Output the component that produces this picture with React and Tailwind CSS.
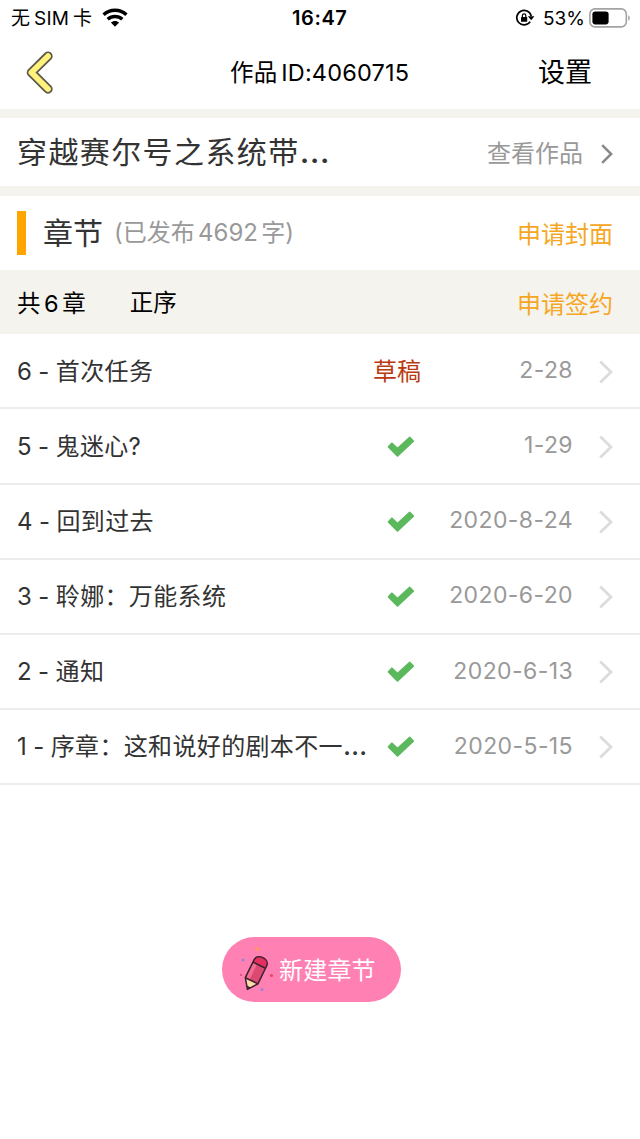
import React from "react";
import clsx from "clsx";

const chapters = [
  { no: 6, title: "首次任务", date: "2-28", draft: true },
  { no: 5, title: "鬼迷心?", date: "1-29" },
  { no: 4, title: "回到过去", date: "2020-8-24" },
  { no: 3, title: "聆娜：万能系统", date: "2020-6-20" },
  { no: 2, title: "通知", date: "2020-6-13" },
  { no: 1, title: "序章：这和说好的剧本不一", more: true, date: "2020-5-15" },
];

const Wifi = () => (
  <svg width="26" height="20" viewBox="0 0 26 20" fill="none" stroke="#000" strokeWidth="3.5">
    <path d="M1.6 6.8C8 0.8 18 0.8 24.4 6.8" />
    <path d="M5.7 11.3C10 7.5 16 7.5 20.3 11.3" />
    <path d="M8.9 14.6C11.3 12.4 14.7 12.4 17.1 14.6L13 18.8Z" fill="#000" stroke="none" />
  </svg>
);

const RotationLock = () => (
  <svg width="20" height="18" viewBox="0 0 20 18" fill="none">
    <path d="M15.2 12.6A7.3 7.3 0 1 1 16.2 7" stroke="#000" strokeWidth="1.7" />
    <path d="M12.9 7.2H19.4L16.2 11.2Z" fill="#000" />
    <rect x="6" y="8" width="6.2" height="4.8" rx="0.6" fill="#000" />
    <path d="M7.4 8.4V6.6a1.7 1.7 0 0 1 3.4 0v1.8" stroke="#000" strokeWidth="1.2" />
  </svg>
);

const Battery = () => (
  <svg width="42" height="20" viewBox="0 0 42 20" fill="none">
    <rect x="0.9" y="0.9" width="36.4" height="18" rx="5" stroke="#a3a3a3" strokeWidth="1.6" />
    <rect x="3.4" y="3.4" width="16.2" height="13" rx="2.8" fill="#000" />
    <path d="M39.2 7.2c2.2 1 2.2 4.6 0 5.6z" fill="#a3a3a3" />
  </svg>
);

const BackIcon = () => (
  <svg width="28" height="44" viewBox="0 0 28 44" fill="none" strokeLinecap="round" strokeLinejoin="round">
    <path d="M22 5.2L5.4 21.5L22 38" stroke="#5a594b" strokeWidth="9.4" />
    <path d="M22 5.2L5.4 21.5L22 38" stroke="#fff17c" strokeWidth="5.8" />
  </svg>
);

const Check = () => (
  <svg width="28" height="22" viewBox="0 0 28 22" fill="#5cb85c" stroke="#5cb85c" strokeWidth="1.8" strokeLinejoin="round">
    <path d="M1.6 10.8L4.9 7.3L10.5 12.6L22.8 1.5L26.2 5.1L10.5 19.9Z" />
  </svg>
);

const Chevron = ({ className, width }) => (
  <svg className={className} width="14" height="24" viewBox="0 0 14 24" fill="none" stroke="currentColor" strokeWidth={width}>
    <path d="M1.2 1.4L12 12L1.2 22.6" />
  </svg>
);

const Pencil = () => (
  <svg width="36" height="48" viewBox="0 0 36 48" fill="none">
    <circle cx="17" cy="3" r="2.1" fill="#ff9868" />
    <circle cx="3" cy="14" r="1.5" fill="#9b7fe0" />
    <circle cx="1" cy="29" r="1" fill="#e8416d" />
    <circle cx="31.5" cy="29.5" r="1.6" fill="#ee4459" />
    <circle cx="22" cy="43.6" r="1.5" fill="#9b7fe0" />
    <g transform="translate(7.4 43.4) rotate(26)" strokeLinejoin="round">
      <path d="M0 0L-7 -9.6L7 -9.6Z" fill="#fbdcaa" />
      <path d="M0 0L-2.3 -3.2H2.3Z" fill="#3d2130" />
      <path d="M-7 -9.6H7V-27H-7Z" fill="#dc4a74" />
      <path d="M-7 -9.6H-2.4V-27H-7Z" fill="#f26d90" />
      <path d="M-7 -27H7V-29.5C7 -37.4 -7 -37.4 -7 -29.5Z" fill="#e5305f" />
      <path d="M0 0L-7 -9.6V-29.5C-7 -37.4 7 -37.4 7 -29.5V-9.6ZM-7 -9.6H7M-7 -27H7" stroke="#3d2130" strokeWidth="1.5" />
    </g>
  </svg>
);

const StatusBar = () => (
  <div className="flex h-9 items-center pl-[11px] pr-[9px] text-[19px] leading-none">
    <div className="flex w-[281px] items-center">
      <span className="w-[83px] whitespace-nowrap tracking-[0.3px] [word-spacing:-2px]">无 SIM 卡</span>
      <span className="ml-2">
        <Wifi />
      </span>
    </div>
    <span className="text-[20px] font-semibold tracking-[0.6px]">16:47</span>
    <div className="ml-auto flex items-center">
      <RotationLock />
      <span className="ml-2 mr-1">53%</span>
      <Battery />
    </div>
  </div>
);

const ChapterRow = ({ no, title, more, date, draft }) => (
  <li className="flex h-[75.1px] items-center border-b-2 border-[#ededed] pl-[17px] pr-[27px] pt-0.5">
    <span className="w-[356px] whitespace-nowrap text-[24px] text-[#333]">
      <span className="tracking-[-0.15px]">{no} - </span>
      <span className="tracking-[0.35px]">{title}</span>
      {more && <span className="text-[28px] leading-none tracking-[1px]">…</span>}
    </span>
    {draft ? (
      <span className="w-12 whitespace-nowrap text-[24px] text-[#b93a11]">草稿</span>
    ) : (
      <span className="ml-[14px]">
        <Check />
      </span>
    )}
    <span className="mb-[3px] ml-auto text-[23px] tracking-[0.4px] text-[#999]">{date}</span>
    <Chevron className="ml-[26px] text-[#dcdcdc]" width="2.8" />
  </li>
);

export default function App() {
  return (
    <div className={clsx("min-h-[1139px] w-[640px] overflow-hidden bg-white text-black", "font-['Inter','Noto_Sans_CJK_SC',sans-serif]")}>
      <header className="h-[109px]">
        <StatusBar />
        <div className="flex h-[73px] items-center pl-[26px] pr-[48px]">
          <BackIcon />
          <h1 className="ml-[176px] whitespace-nowrap text-[23.5px] tracking-[0.2px] [word-spacing:-3px]">作品 ID:4060715</h1>
          <span className="ml-auto pt-0.5 text-[27px]">设置</span>
        </div>
      </header>

      <section className="flex h-[87px] items-center justify-between border-b-[10px] border-t-[9px] border-[#f5f3ee] pl-[17px] pr-[26px]">
        <h2 className="text-[30px] tracking-[1.4px] text-[#333]">
          穿越赛尔号之系统带<span className="text-[35px] leading-none">…</span>
        </h2>
        <div className="flex items-center pt-[3px] text-[24px] text-[#999]">
          查看作品
          <Chevron className="ml-[17px] h-5 text-[#888]" width="3" />
        </div>
      </section>

      <section className="flex h-[74px] items-center pl-[17px] pr-[27px]">
        <span className="h-11 w-[9px] bg-[#ffa500]" />
        <h2 className="ml-[17px] text-[30px] text-[#333]">章节</h2>
        <span className="ml-[11px] text-[24px] text-[#999] [word-spacing:-3.5px]">(已发布 4692 字)</span>
        <button className="ml-auto pt-[3px] text-[24px] text-[#f5a623]">申请封面</button>
      </section>

      <section className="flex h-[64.4px] items-center bg-[#f5f3ee] pl-[17px] pr-[27px] text-[23.5px]">
        <span className="pt-[3px] [word-spacing:-3px]">共 6 章</span>
        <span className="ml-11">正序</span>
        <button className="ml-auto pt-[5px] text-[24px] text-[#f5a623]">申请签约</button>
      </section>

      <ul>
        {chapters.map((c) => (
          <ChapterRow key={c.no} {...c} />
        ))}
      </ul>

      <button className="ml-[222px] mt-[152.5px] flex h-[65px] w-[179px] items-center rounded-full bg-[#ff80b3] pl-[18px] text-[24px] text-white">
        <Pencil />
        <span className="ml-[3px] whitespace-nowrap pt-0.5 tracking-[0.2px]">新建章节</span>
      </button>
    </div>
  );
}
